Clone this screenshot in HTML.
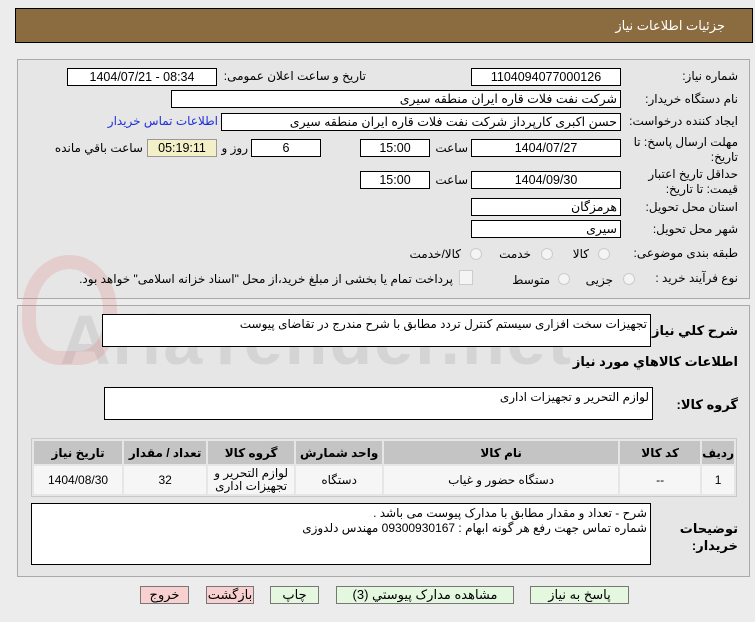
<!DOCTYPE html>
<html><head><meta charset="utf-8"><style>
body{margin:0;width:755px;height:622px;background:#ececec;font-family:"Liberation Sans","DejaVu Sans",sans-serif;font-size:12px;color:#000;position:relative;overflow:hidden}
.a{position:absolute}
.f{position:absolute;background:#fff;border:1px solid #000;box-sizing:border-box;text-align:center;line-height:16px;font-size:12.5px}
.l{position:absolute;direction:rtl;text-align:right;white-space:nowrap}
.ta{position:absolute;background:#fff;border:1px solid #000;box-sizing:border-box;direction:rtl;padding:2px 3px;font-size:12px}
.b{position:absolute;border:1px solid #777;box-sizing:border-box;text-align:center;line-height:16px;font-size:13px}
.r{position:absolute;width:12px;height:12px;border-radius:50%;border:1px solid #ccc;background:#f4f4f4;box-sizing:border-box}
table{border-collapse:separate;border-spacing:2px;position:absolute;left:31px;top:438px;width:706px;border:1px solid #c8c8c8;direction:rtl}
th{background:#c4c4c4;height:23px;font-size:12px;font-weight:bold;padding:0}
td{background:#f6f6f6;height:28px;text-align:center;font-size:12px;padding:0;line-height:13px}
</style></head><body>
<div class="a" style="left:15px;top:8px;width:738px;height:35px;background:#8b6b40;border:1px solid #000;box-sizing:border-box"></div>
<div class="l" style="right:30px;top:18px;color:#fff;font-size:13px">جزئیات اطلاعات نیاز</div>
<div class="a" style="left:17px;top:59px;width:733px;height:240px;border:1px solid #aaa;box-sizing:border-box;background:#e6e6e6"></div>
<div class="a" style="left:17px;top:305px;width:733px;height:272px;border:1px solid #aaa;box-sizing:border-box;background:#e6e6e6"></div>
<div class="a" style="left:60px;top:300px;font-size:70px;font-weight:bold;color:rgba(150,150,150,0.22);letter-spacing:2px">AriaTender.net</div>
<div class="a" style="left:22px;top:255px;width:95px;height:110px;border:14px solid rgba(220,120,120,0.22);border-radius:50% 50% 40% 40%;box-sizing:border-box"></div>

<div class="l" style="right:17px;top:69px">شماره نیاز:</div>
<div class="f" style="left:471px;top:68px;width:150px;height:18px">1104094077000126</div>
<div class="l" style="right:389px;top:69px">تاریخ و ساعت اعلان عمومی:</div>
<div class="f" style="left:67px;top:68px;width:150px;height:18px">1404/07/21 - 08:34</div>

<div class="l" style="right:17px;top:92px">نام دستگاه خریدار:</div>
<div class="f" style="left:171px;top:90px;width:450px;height:18px;text-align:right;direction:rtl;padding-right:3px">شرکت نفت فلات قاره ایران منطقه سیری</div>

<div class="l" style="right:17px;top:114px">ایجاد کننده درخواست:</div>
<div class="f" style="left:221px;top:113px;width:400px;height:18px;text-align:right;direction:rtl;padding-right:3px">حسن اکبری کارپرداز شرکت نفت فلات قاره ایران منطقه سیری</div>
<div class="l" style="right:537px;top:114px;color:#1f2fd8">اطلاعات تماس خریدار</div>

<div class="l" style="right:17px;top:135px;line-height:15px">مهلت ارسال پاسخ: تا<br>تاریخ:</div>
<div class="f" style="left:471px;top:139px;width:150px;height:18px">1404/07/27</div>
<div class="l" style="right:287px;top:141px">ساعت</div>
<div class="f" style="left:360px;top:139px;width:70px;height:18px">15:00</div>
<div class="f" style="left:251px;top:139px;width:70px;height:18px">6</div>
<div class="l" style="right:507px;top:141px">روز و</div>
<div class="f" style="left:147px;top:139px;width:70px;height:18px;background:#f3f0c8;border-color:#999">05:19:11</div>
<div class="l" style="right:612px;top:141px">ساعت باقي مانده</div>

<div class="l" style="right:17px;top:167px;line-height:15px">حداقل تاریخ اعتبار<br>قیمت: تا تاریخ:</div>
<div class="f" style="left:471px;top:171px;width:150px;height:18px">1404/09/30</div>
<div class="l" style="right:287px;top:173px">ساعت</div>
<div class="f" style="left:360px;top:171px;width:70px;height:18px">15:00</div>

<div class="l" style="right:17px;top:200px">استان محل تحویل:</div>
<div class="f" style="left:471px;top:198px;width:150px;height:18px;text-align:right;direction:rtl;padding-right:3px">هرمزگان</div>
<div class="l" style="right:17px;top:222px">شهر محل تحویل:</div>
<div class="f" style="left:471px;top:220px;width:150px;height:18px;text-align:right;direction:rtl;padding-right:3px">سیری</div>

<div class="l" style="right:17px;top:246px">طبقه بندی موضوعی:</div>
<div class="r" style="left:598px;top:248px"></div><div class="l" style="right:166px;top:247px">کالا</div>
<div class="r" style="left:541px;top:248px"></div><div class="l" style="right:224px;top:247px">خدمت</div>
<div class="r" style="left:470px;top:248px"></div><div class="l" style="right:294px;top:247px">کالا/خدمت</div>

<div class="l" style="right:17px;top:271px">نوع فرآیند خرید :</div>
<div class="r" style="left:623px;top:273px"></div><div class="l" style="right:142px;top:273px">جزیی</div>
<div class="r" style="left:558px;top:273px"></div><div class="l" style="right:205px;top:273px">متوسط</div>
<div class="a" style="left:459px;top:270px;width:12px;height:13px;border:1px solid #ccc;background:#f4f4f4"></div>
<div class="l" style="right:302px;top:272px">پرداخت تمام یا بخشی از مبلغ خرید،از محل "اسناد خزانه اسلامی" خواهد بود.</div>

<div class="l" style="right:17px;top:323px;font-weight:bold;font-size:13px">شرح کلي نیاز:</div>
<div class="ta" style="left:102px;top:314px;width:549px;height:33px">تجهیزات سخت افزاری سیستم کنترل تردد مطابق با شرح مندرج در تقاضای پیوست</div>
<div class="l" style="right:17px;top:354px;font-weight:bold;font-size:13px">اطلاعات کالاهاي مورد نیاز</div>
<div class="l" style="right:17px;top:397px;font-weight:bold;font-size:13px">گروه کالا:</div>
<div class="ta" style="left:104px;top:387px;width:549px;height:33px">لوازم التحریر و تجهیزات اداری</div>

<table>
<tr><th style="width:24px">ردیف</th><th style="width:80px">کد کالا</th><th style="width:234px">نام کالا</th><th style="width:86px">واحد شمارش</th><th style="width:86px">گروه کالا</th><th style="width:82px">تعداد / مقدار</th><th>تاریخ نیاز</th></tr>
<tr><td>1</td><td>--</td><td>دستگاه حضور و غیاب</td><td>دستگاه</td><td>لوازم التحریر و<br>تجهیزات اداری</td><td>32</td><td>1404/08/30</td></tr>
</table>

<div class="l" style="right:17px;top:520px;font-weight:bold;font-size:13px;line-height:17px">توضیحات<br>خریدار:</div>
<div class="ta" style="left:31px;top:503px;width:620px;height:62px;line-height:15px">شرح - تعداد و مقدار مطابق با مدارک پیوست می باشد .<br>شماره تماس جهت رفع هر گونه ابهام : 09300930167 مهندس دلدوزی</div>

<div class="b" style="left:140px;top:586px;width:49px;height:18px;background:#f8d0d0">خروج</div>
<div class="b" style="left:206px;top:586px;width:48px;height:18px;background:#f8d0d0">بازگشت</div>
<div class="b" style="left:270px;top:586px;width:49px;height:18px;background:#e4f8e0">چاپ</div>
<div class="b" style="left:336px;top:586px;width:178px;height:18px;background:#e4f8e0">مشاهده مدارک پیوستي (3)</div>
<div class="b" style="left:530px;top:586px;width:99px;height:18px;background:#e4f8e0">پاسخ به نیاز</div>
</body></html>
